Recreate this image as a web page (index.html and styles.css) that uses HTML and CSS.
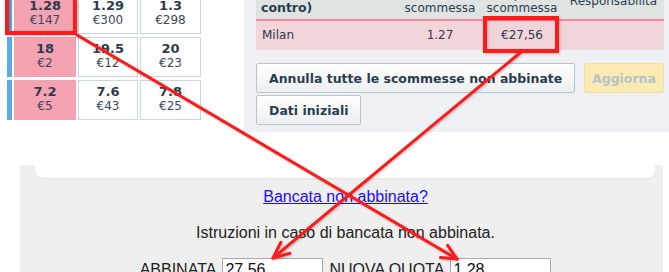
FILE: index.html
```html
<!DOCTYPE html>
<html lang="it">
<head>
    <meta charset="UTF-8">
    <meta name="viewport" content="width=device-width, initial-scale=1.0">
    <title>Bancata non abbinata</title>
    <link rel="stylesheet" href="styles.css">
</head>
<body>
    <div class="top">
        <div class="ladder">
            <div class="ladder-row">
                <span class="bar"></span>
                <div class="cell lay"><b>1.28</b><span>€147</span></div>
                <div class="cell"><b>1.29</b><span>€300</span></div>
                <div class="cell"><b>1.3</b><span>€298</span></div>
            </div>
            <div class="ladder-row">
                <span class="bar"></span>
                <div class="cell lay"><b>18</b><span>€2</span></div>
                <div class="cell"><b>19.5</b><span>€12</span></div>
                <div class="cell"><b>20</b><span>€23</span></div>
            </div>
            <div class="ladder-row">
                <span class="bar"></span>
                <div class="cell lay"><b>7.2</b><span>€5</span></div>
                <div class="cell"><b>7.6</b><span>€43</span></div>
                <div class="cell"><b>7.8</b><span>€25</span></div>
            </div>
        </div>

        <div class="panel">
            <table class="bets">
                <thead>
                    <tr>
                        <th class="col-sel">Bancate (Scommesse<br>contro)</th>
                        <th class="col-odds">Quota<br>scommessa</th>
                        <th class="col-stake">Importo<br>scommessa</th>
                        <th class="col-liab">Responsabilità</th>
                    </tr>
                </thead>
                <tbody>
                    <tr>
                        <td class="col-sel">Milan</td>
                        <td>1.27</td>
                        <td>€27,56</td>
                        <td></td>
                    </tr>
                </tbody>
            </table>
            <div class="actions">
                <div class="actions-row">
                    <button type="button" class="btn">Annulla tutte le scommesse non abbinate</button>
                    <button type="button" class="btn btn-refresh" disabled>Aggiorna</button>
                </div>
                <div class="actions-row">
                    <button type="button" class="btn">Dati iniziali</button>
                </div>
            </div>
        </div>
    </div>

    <div class="unmatched">
        <div class="cap"></div>
        <div class="unmatched-body">
            <a href="#" class="help-link">Bancata non abbinata?</a>
            <p class="note">Istruzioni in caso di bancata non abbinata.</p>
            <div class="fields">
                <label for="matched">ABBINATA</label>
                <input type="text" id="matched" value="27,56">
                <label for="newOdds">NUOVA QUOTA</label>
                <input type="text" id="newOdds" value="1,28">
            </div>
        </div>
    </div>

    <!-- annotation overlay -->
    <svg class="marks" width="669" height="272" viewBox="0 0 669 272">
        <g fill="none" stroke="#ff1a1a" stroke-width="4">
            <rect x="7" y="-10" width="68" height="43"/>
            <rect x="485" y="18" width="72" height="33"/>
        </g>
        <g fill="none" stroke="#ff1a1a" stroke-width="3" stroke-linecap="round" stroke-linejoin="round">
            <line x1="77" y1="35" x2="457" y2="259"/>
            <polyline points="440.5,257.4 457,259 447.6,245.4"/>
            <line x1="521" y1="52" x2="273" y2="258"/>
            <polyline points="280.8,242.4 273,258 289.8,253.2"/>
        </g>
    </svg>
</body>
</html>
```

FILE: styles.css
```css
body {
    margin: 0;
    width: 669px;
    height: 272px;
    overflow: hidden;
    position: relative;
    background: #fff;
    font-family: "DejaVu Sans", Verdana, sans-serif;
    color: #2c3c4d;
}

.top {
    display: flex;
    align-items: flex-start;
    height: 165px;
}

/* Price ladder */
.ladder {
    display: flex;
    flex-direction: column;
    gap: 3px;
    margin: -6px 0 0 7px;
}

.ladder-row {
    display: grid;
    grid-template-columns: 5px 62px 60px 61px;
    column-gap: 2px;
    height: 40px;
}

.bar {
    background: #5ba9e6;
}

.cell {
    display: flex;
    flex-direction: column;
    align-items: center;
    padding-top: 3px;
    line-height: 15px;
    border: 1px solid #c9d5de;
    background: #fff;
}

.cell.lay {
    background: #f5a3b3;
    border-color: #f3a0b0;
}

.cell b {
    font-size: 13px;
}

.cell span {
    font-size: 12px;
    color: #3a4858;
}

/* Bets panel */
.panel {
    margin-left: 43px;
    flex: 1;
    background: #eef0f3;
    padding: 0 6px 7px 12px;
}

.bets {
    width: 408px;
    margin-top: -17px;
    border-collapse: collapse;
    table-layout: fixed;
    font-size: 12px;
}

.bets th,
.bets td {
    box-sizing: border-box;
    white-space: nowrap;
    overflow: hidden;
}

.bets th {
    background: #dfe4e3;
    font-weight: normal;
    line-height: 14px;
    padding: 4px 2px;
    border-bottom: 2px solid #f4899b;
    vertical-align: middle;
    text-align: center;
}

.bets th.col-sel {
    font-weight: bold;
    font-size: 12.5px;
    text-align: left;
    padding-left: 5px;
}

.col-sel { width: 143px; }
.col-odds { width: 82px; }
.col-stake { width: 82px; }
.col-liab { width: 101px; }

.bets td {
    background: #f2d4db;
    padding: 7px 2px;
    line-height: 15px;
    text-align: center;
}

.bets td.col-sel {
    text-align: left;
    padding-left: 6px;
}

.actions {
    display: flex;
    flex-direction: column;
    gap: 2px;
    margin-top: 13px;
}

.actions-row {
    display: flex;
    justify-content: space-between;
    width: 408px;
}

.btn {
    font-family: "DejaVu Sans", Verdana, sans-serif;
    font-size: 12.5px;
    font-weight: bold;
    color: #2c3d4f;
    height: 30px;
    padding: 0 12px;
    border: 1px solid #b9c5ce;
    border-radius: 2px;
    background: linear-gradient(#ffffff, #eceff1);
    white-space: nowrap;
}

.btn-refresh {
    width: 80px;
    padding: 0;
    color: #b7c1c9;
    background: #fbeab3;
    border-color: #f1dfa5;
}

/* Unmatched bet help */
.unmatched {
    margin: 0 6px 0 20px;
    height: 107px;
    background: #efefef;
    font-family: "Liberation Sans", Arial, sans-serif;
    font-size: 16px;
    color: #222;
}

.cap {
    height: 13px;
    margin: 0 8px 0 15px;
    background: #fff;
    border-radius: 0 0 8px 8px;
    box-shadow: 0 1px 1px rgba(0, 0, 0, 0.05);
}

.unmatched-body {
    display: flex;
    flex-direction: column;
    align-items: center;
    padding-left: 8px;
    line-height: 18px;
}

.help-link {
    margin-top: 10px;
    color: #1a0dff;
}

.note {
    margin: 18px 0 0;
}

.fields {
    display: flex;
    align-items: baseline;
    gap: 6px;
    margin-top: 16px;
}

.fields input {
    width: 101px;
    height: 24px;
    box-sizing: border-box;
    padding: 0 2px;
    border: 1px solid #a9a9a9;
    font-family: "Liberation Sans", Arial, sans-serif;
    font-size: 16px;
    color: #111;
}

.marks {
    position: absolute;
    top: 0;
    left: 0;
    pointer-events: none;
    filter: drop-shadow(1px 1px 1px rgba(0, 0, 0, 0.25));
}
```
